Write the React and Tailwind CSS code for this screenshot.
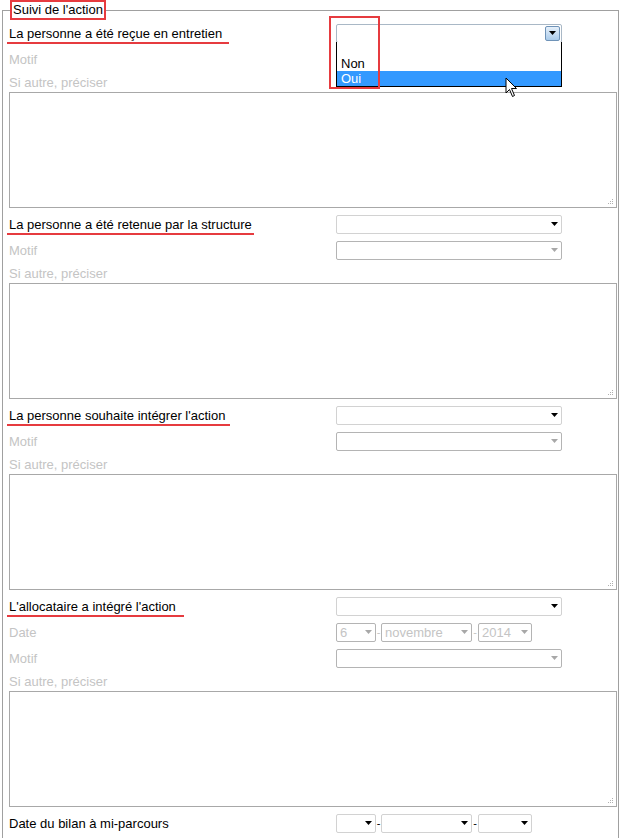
import React from "react";

const RED = "bg-[#e63b3f]";

function Arrow({ disabled }) {
  return (
    <svg width="7" height="4" viewBox="0 0 7 4" className="shrink-0">
      <path d="M0 0h7L3.5 4z" fill={disabled ? "#a8a8a8" : "#000"} />
    </svg>
  );
}

function Select({ w, value, disabled }) {
  return (
    <div
      className={`flex h-[19px] ${w} shrink-0 items-center justify-between rounded-[2px] border bg-white pl-[3px] pr-[3px] leading-[15px] ${
        disabled ? "border-[#b4b4b4] text-[#c4c4c4]" : "border-[#d2d2d2] text-black"
      }`}
    >
      <span>{value}</span>
      <Arrow disabled={disabled} />
    </div>
  );
}

function FocusSelect() {
  return (
    <div className="flex h-[19px] w-[226px] shrink-0 items-center justify-end rounded-[2px] border border-[#a9b8c6] bg-white pr-[1px]">
      <div className="flex h-[15px] w-[15px] items-center justify-center rounded-[2px] border border-[#6f93b8] bg-gradient-to-b from-[#e6f0fa] to-[#aacbea]">
        <Arrow />
      </div>
    </div>
  );
}

function DateSelects({ disabled }) {
  const dash = disabled ? "text-[#c4c4c4]" : "text-black";
  return (
    <div className="flex items-center">
      <Select w="w-[40px]" value={disabled ? "6" : ""} disabled={disabled} />
      <span className={`w-[5px] text-center text-[11px] leading-[15px] ${dash}`}>-</span>
      <Select w="w-[91px]" value={disabled ? "novembre" : ""} disabled={disabled} />
      <span className={`w-[6px] text-center text-[11px] leading-[15px] ${dash}`}>-</span>
      <Select w="w-[54px]" value={disabled ? "2014" : ""} disabled={disabled} />
    </div>
  );
}

function Row({ children, label, gray, line }) {
  return (
    <div className="flex h-[26px] items-center">
      <div className={`w-[327px] shrink-0 leading-[15px] ${gray ? "text-[#c4c4c4]" : "text-black"}`}>
        {line ? (
          <span className="relative inline-block">
            {label}
            <span className={`absolute left-[-2px] top-[16px] h-[2px] ${line} ${RED}`} />
          </span>
        ) : (
          label
        )}
      </div>
      {children}
    </div>
  );
}

function Grip() {
  return (
    <svg width="7" height="7" viewBox="0 0 7 7" className="absolute bottom-[2px] right-[2px]">
      {[
        [5, 1],
        [3, 3],
        [5, 3],
        [1, 5],
        [3, 5],
        [5, 5],
      ].map(([x, y]) => (
        <rect key={`${x}-${y}`} x={x} y={y} width="1" height="1" fill="#b0b0b0" />
      ))}
    </svg>
  );
}

function Area() {
  return (
    <div className="relative mb-[3px] h-[116px] w-full border border-[#a8a8a8] bg-white">
      <Grip />
    </div>
  );
}

function Block({ label, line, focus, date }) {
  return (
    <div>
      <Row label={label} line={line}>
        {focus ? <FocusSelect /> : <Select w="w-[226px]" />}
      </Row>
      {date && (
        <Row label="Date" gray>
          <DateSelects disabled />
        </Row>
      )}
      <Row label="Motif" gray>
        <Select w="w-[226px]" disabled />
      </Row>
      <div className="flex h-[20px] items-center leading-[15px] text-[#c4c4c4]">Si autre, préciser</div>
      <Area />
    </div>
  );
}

export default function App() {
  return (
    <div className="relative h-[838px] w-[622px] overflow-hidden bg-white font-['Liberation_Sans',Arial,sans-serif] text-[13px]">
      <fieldset className="ml-[2px] w-[617px] border border-[#a0a0a0] pb-[10px] pl-[6px] pr-[1px]">
        <legend className="ml-[1px] border-2 border-[#e63b3f] px-[1px] leading-[16px] text-black">
          Suivi de l'action
        </legend>

        <Block label="La personne a été reçue en entretien" line="w-[222px]" focus />
        <Block label="La personne a été retenue par la structure" line="w-[247px]" />
        <Block label="La personne souhaite intégrer l'action" line="w-[223px]" />
        <Block label="L'allocataire a intégré l'action" line="w-[177px]" date />

        <div className="mt-[1px]">
          <Row label="Date du bilan à mi-parcours">
            <DateSelects />
          </Row>
        </div>
      </fieldset>

      {/* open dropdown list */}
      <div className="absolute left-[336px] top-[42px] flex h-[45px] w-[226px] flex-col border border-t-0 border-black bg-white pt-[14px] leading-[15px]">
        <div className="h-[15px] pl-[4px] text-black">Non</div>
        <div className="h-[15px] bg-[#3399ff] pl-[4px] text-white">Oui</div>
      </div>

      {/* annotation box */}
      <div className="absolute left-[329px] top-[16px] h-[73px] w-[51px] border-2 border-[#e63b3f]" />

      {/* mouse pointer */}
      <svg width="13" height="21" viewBox="0 0 13 21" className="absolute left-[505px] top-[77px]">
        <path d="M1 1 L1 16 L4.5 12.5 L7.5 19.5 L9.5 18.5 L6.5 11.5 L11.5 11.5 Z" fill="#fff" stroke="#000" strokeWidth="1" strokeLinejoin="miter" />
      </svg>
    </div>
  );
}
